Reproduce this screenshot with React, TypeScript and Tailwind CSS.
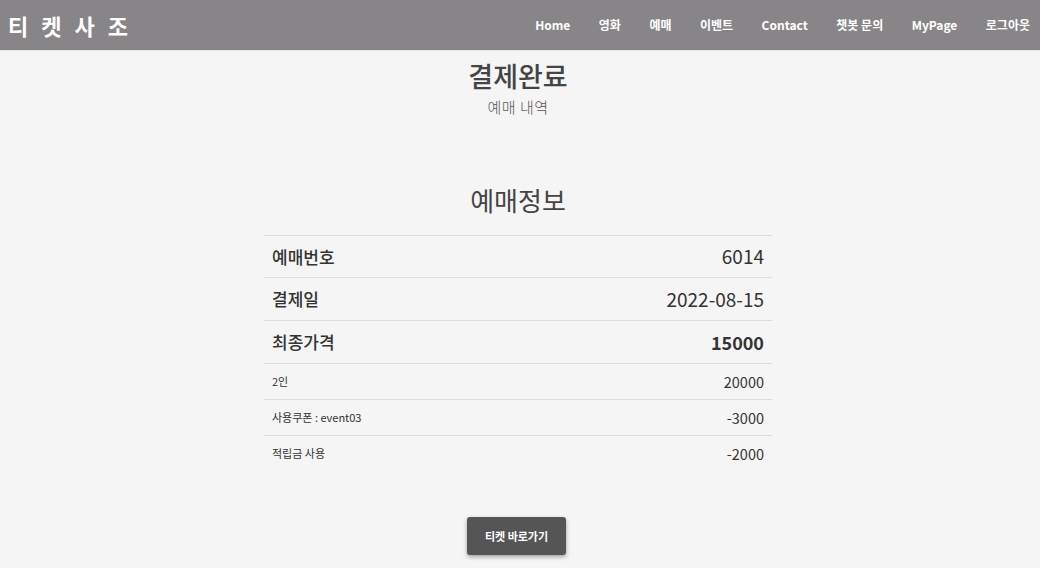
const navItems = ["Home", "영화", "예매", "이벤트", "Contact", "챗봇 문의", "MyPage", "로그아웃"];

const mainRows = [
  { label: "예매번호", value: "6014", bold: false, h: "h-[42px]" },
  { label: "결제일", value: "2022-08-15", bold: false, h: "h-[43px]" },
  { label: "최종가격", value: "15000", bold: true, h: "h-[43px]" },
];

const subRows = [
  { label: "2인", value: "20000" },
  { label: "사용쿠폰 : event03", value: "-3000" },
  { label: "적립금 사용", value: "-2000" },
];

export default function App() {
  return (
    <div className="min-h-[568px] bg-[#f5f5f5] font-['Noto_Sans_CJK_KR','Noto_Sans',sans-serif] text-[#333]">
      {/* 헤더 */}
      <header className="h-[51px] bg-[#878587] flex items-center justify-between pl-[8px] pr-[10px] border-b border-[#e4e4e4]">
        <div className="text-white text-[22px] font-bold tracking-[4px]">티 켓 사 조</div>
        <nav className="flex items-center gap-[28.5px] text-white text-[12px] font-bold">
          {navItems.map((item) => (
            <span key={item}>{item}</span>
          ))}
        </nav>
      </header>

      <main className="pr-[4px]">
        {/* 제목 */}
        <div className="flex flex-col items-center pt-[5px]">
          <h1 className="text-[27px] font-medium text-[#444] leading-[40px]">결제완료</h1>
          <p className="text-[15px] font-light text-[#555] leading-[20px] mt-[1px] tracking-[0.5px]">예매 내역</p>
        </div>

        {/* 예매정보 */}
        <section className="w-[508px] mx-auto mt-[65px]">
          <h2 className="text-center text-[26px] text-[#444] leading-[36px] mb-[17px]">예매정보</h2>
          <div>
            {mainRows.map((row) => (
              <div
                key={row.label}
                className={`${row.h} flex items-center justify-between border-t border-[#dcdcdc] pl-[8px] pr-[8px]`}
              >
                <span className="text-[17px] font-medium text-[#333]">{row.label}</span>
                <span className={row.bold ? "text-[18px] font-bold text-[#333]" : "text-[19px] text-[#333]"}>
                  {row.value}
                </span>
              </div>
            ))}
            {subRows.map((row) => (
              <div
                key={row.label}
                className="h-[36px] flex items-center justify-between border-t border-[#dcdcdc] pl-[8px] pr-[8px]"
              >
                <span className="text-[11px] text-[#333]">{row.label}</span>
                <span className="text-[14.5px] text-[#333]">{row.value}</span>
              </div>
            ))}
          </div>
        </section>

        {/* 버튼 */}
        <div className="flex justify-center mt-[46px] pr-[3px]">
          <button className="w-[99px] h-[38px] rounded-[3px] bg-[#555555] text-white text-[11px] font-bold shadow-[0_2px_4px_rgba(0,0,0,0.35)]">
            티켓 바로가기
          </button>
        </div>
      </main>
    </div>
  );
}
